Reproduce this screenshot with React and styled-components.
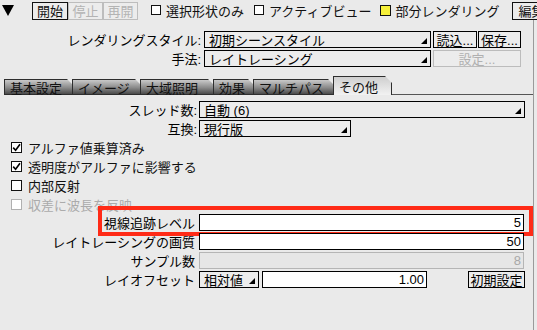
import React from "react";
import styled, { createGlobalStyle } from "styled-components";

const GlobalStyle = createGlobalStyle`
  html, body {
    margin: 0;
    padding: 0;
    background: #eaeaea;
  }
  body {
    font-family: "Liberation Sans", "Noto Sans CJK JP", sans-serif;
    font-size: 13px;
    color: #000;
  }
`;

const Screen = styled.div`
  width: 537px;
  height: 330px;
  overflow: hidden;
  background: #eaeaea;
  display: flex;
  flex-direction: column;
`;

const Toolbar = styled.div`
  height: 20px;
  display: flex;
  align-items: center;
  padding-left: 2px;
  white-space: nowrap;
`;

const Arrow = styled.svg`
  width: 12px;
  height: 11px;
  margin-right: 18px;
  flex: none;
`;

const ToolButton = styled.div`
  box-sizing: border-box;
  height: 18px;
  width: ${(p) => p.$w || 35}px;
  border: 1px solid ${(p) => (p.$disabled ? "#bdbdbd" : "#111")};
  color: ${(p) => (p.$disabled ? "#b3b3b3" : "#111")};
  background: #ececec;
  display: flex;
  align-items: center;
  justify-content: center;
  flex: none;
  margin-top: 1px;
`;

const CheckItem = styled.div`
  display: flex;
  align-items: center;
  gap: 5px;
  margin-left: ${(p) => p.$ml || 0}px;
  color: ${(p) => (p.$disabled ? "#ababab" : "#111")};
`;

const Box = styled.span`
  box-sizing: border-box;
  width: ${(p) => p.$size || 11}px;
  height: ${(p) => p.$size || 11}px;
  border: 1px solid ${(p) => (p.$disabled ? "#b0b0b0" : "#111")};
  background: ${(p) => p.$fill || "#fff"};
  display: inline-flex;
  align-items: center;
  justify-content: center;
  flex: none;
`;

const Panel = styled.div`
  flex: 1;
  width: 533px;
  border-right: 1px solid #9a9a9a;
  display: flex;
  flex-direction: column;
`;

const Section = styled.div`
  display: flex;
  flex-direction: column;
  gap: ${(p) => p.$gap || 2}px;
  margin-top: ${(p) => p.$mt || 0}px;
`;

const Row = styled.div`
  position: relative;
  display: flex;
  align-items: center;
  height: 17px;
  gap: ${(p) => p.$gap || 3}px;
`;

const Label = styled.div`
  width: ${(p) => p.$w}px;
  text-align: right;
  white-space: nowrap;
  flex: none;
`;

const Select = styled.div`
  position: relative;
  box-sizing: border-box;
  width: ${(p) => p.$w}px;
  height: 17px;
  border: 1px solid #000;
  background: #ececec;
  padding-left: 4px;
  display: flex;
  align-items: center;
  flex: none;
  white-space: nowrap;

  &::after {
    content: "";
    position: absolute;
    right: 3px;
    bottom: 3px;
    width: 6px;
    height: 6px;
    background: #000;
    clip-path: polygon(100% 0, 100% 100%, 0 100%);
  }
`;

const Field = styled.div`
  box-sizing: border-box;
  width: ${(p) => p.$w}px;
  height: 17px;
  border: 1px solid ${(p) => (p.$disabled ? "#b5b5b5" : "#000")};
  background: ${(p) => (p.$disabled ? "#e6e6e6" : "#fff")};
  color: ${(p) => (p.$disabled ? "#a8a8a8" : "#000")};
  display: flex;
  align-items: center;
  justify-content: flex-end;
  padding-right: 2px;
  flex: none;
`;

const Button = styled.div`
  box-sizing: border-box;
  width: ${(p) => p.$w}px;
  height: 17px;
  border: 1px solid ${(p) => (p.$disabled ? "#bcbcbc" : "#000")};
  color: ${(p) => (p.$disabled ? "#b0b0b0" : "#000")};
  background: #ececec;
  display: flex;
  align-items: center;
  justify-content: center;
  flex: none;
  margin-left: ${(p) => p.$ml || 0}px;
`;

const TabBar = styled.div`
  display: flex;
  align-items: flex-end;
  height: 19px;
  margin-top: 9px;
  padding-left: 4px;
`;

const Tab = styled.div`
  box-sizing: border-box;
  width: ${(p) => p.$w}px;
  height: ${(p) => (p.$active ? 19 : 16)}px;
  margin-right: -2px;
  padding-left: 5px;
  border: 1px solid #2e2e2e;
  border-bottom: ${(p) => (p.$active ? "none" : "1px solid #2e2e2e")};
  background: ${(p) =>
    p.$active
      ? "linear-gradient(#cfcfcf, #f2f2f2)"
      : "linear-gradient(#c9c9c9, #8a8a8a 55%, #4a4a4a)"};
  clip-path: polygon(0 0, calc(100% - 7px) 0, 100% 7px, 100% 100%, 0 100%);
  display: flex;
  align-items: center;
  white-space: nowrap;
  color: #111;
  flex: none;
  position: relative;
  z-index: ${(p) => (p.$active ? 2 : 1)};
`;

const TabLine = styled.div`
  width: 141px;
  margin-left: 2px;
  border-bottom: 1px solid #555;
`;

const CheckList = styled.div`
  display: flex;
  flex-direction: column;
  margin-top: 1px;
  padding-left: 11px;
`;

const CheckRow = styled(CheckItem)`
  height: 19px;
  gap: 6px;
`;

const Highlight = styled.div`
  position: absolute;
  left: 98px;
  top: -8px;
  width: 435px;
  height: 30px;
  box-sizing: border-box;
  border: 4px solid #ff2b17;
  pointer-events: none;
`;

const Check = () => (
  <svg width="9" height="9" viewBox="0 0 9 9">
    <path d="M1.2 4.6 L3.6 7.2 L8 1.2" fill="none" stroke="#000" strokeWidth="1.6" />
  </svg>
);

const Checkbox = ({ checked, disabled, children, ml }) => (
  <CheckRow $disabled={disabled} $ml={ml}>
    <Box $disabled={disabled}>{checked && <Check />}</Box>
    <span>{children}</span>
  </CheckRow>
);

const tabs = [
  { label: "基本設定", w: 70 },
  { label: "イメージ", w: 70 },
  { label: "大域照明", w: 75 },
  { label: "効果", w: 42 },
  { label: "マルチパス", w: 82 },
  { label: "その他", w: 59, active: true },
];

const App = () => {
  return (
    <Screen>
      <GlobalStyle />
      <Toolbar>
        <Arrow viewBox="0 0 12 11">
          <polygon points="0,0 12,0 6,11" fill="#000" />
        </Arrow>
        <ToolButton $w={36}>開始</ToolButton>
        <ToolButton $w={35} $disabled>
          停止
        </ToolButton>
        <ToolButton $w={35} $disabled>
          再開
        </ToolButton>
        <CheckItem $ml={13}>
          <Box $size={10} />
          <span>選択形状のみ</span>
        </CheckItem>
        <CheckItem $ml={10}>
          <Box $size={10} />
          <span>アクティブビュー</span>
        </CheckItem>
        <CheckItem $ml={8}>
          <Box $size={11} $fill="#f6f03a" />
          <span>部分レンダリング</span>
        </CheckItem>
        <ToolButton $w={40} style={{ marginLeft: 12 }}>
          編集
        </ToolButton>
      </Toolbar>

      <Panel>
        <Section $mt={11}>
          <Row>
            <Label $w={201}>レンダリングスタイル:</Label>
            <Select $w={227}>初期シーンスタイル</Select>
            <Button $w={44} $ml={-1}>
              読込...
            </Button>
            <Button $w={43} $ml={-2}>
              保存...
            </Button>
          </Row>
          <Row>
            <Label $w={201}>手法:</Label>
            <Select $w={227}>レイトレーシング</Select>
            <Button $w={88} $ml={-1} $disabled>
              設定...
            </Button>
          </Row>
        </Section>

        <TabBar>
          {tabs.map((t) => (
            <Tab key={t.label} $w={t.w} $active={t.active}>
              {t.label}
            </Tab>
          ))}
          <TabLine />
        </TabBar>

        <Section $mt={6} $gap={2}>
          <Row $gap={2}>
            <Label $w={197}>スレッド数:</Label>
            <Select $w={326}>自動 (6)</Select>
          </Row>
          <Row $gap={2}>
            <Label $w={197}>互換:</Label>
            <Select $w={152}>現行版</Select>
          </Row>
        </Section>

        <CheckList>
          <Checkbox checked>アルファ値乗算済み</Checkbox>
          <Checkbox checked>透明度がアルファに影響する</Checkbox>
          <Checkbox>内部反射</Checkbox>
          <Checkbox disabled>収差に波長を反映</Checkbox>
        </CheckList>

        <Section $gap={2}>
          <Row $gap={4}>
            <Label $w={195}>視線追跡レベル</Label>
            <Field $w={325}>5</Field>
            <Highlight />
          </Row>
          <Row $gap={4}>
            <Label $w={195}>レイトレーシングの画質</Label>
            <Field $w={325}>50</Field>
          </Row>
          <Row $gap={4}>
            <Label $w={195}>サンプル数</Label>
            <Field $w={325} $disabled>
              8
            </Field>
          </Row>
          <Row $gap={4}>
            <Label $w={195}>レイオフセット</Label>
            <Select $w={60}>相対値</Select>
            <Field $w={165} style={{ marginLeft: -1 }}>
              1.00
            </Field>
            <Button $w={57} $ml={37}>
              初期設定
            </Button>
          </Row>
        </Section>
      </Panel>
    </Screen>
  );
};

export default App;
